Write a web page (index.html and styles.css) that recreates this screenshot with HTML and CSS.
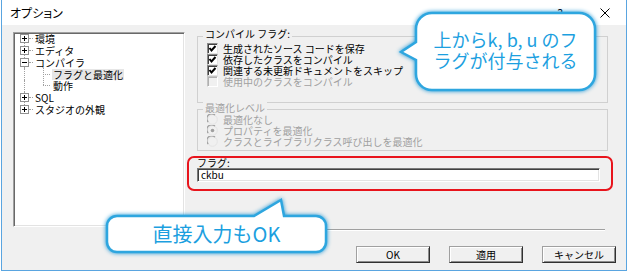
FILE: index.html
```html
<!DOCTYPE html>
<html lang="ja">
<head>
  <meta charset="UTF-8">
  <title>オプション</title>
  <link rel="stylesheet" href="styles.css">
</head>
<body>

  <div class="window">
    <div class="titlebar">
      <span class="title">オプション</span>
      <span class="help">?</span>
      <svg class="close" width="10" height="10" viewBox="0 0 10 10">
        <path d="M0.5 0.5 L9.5 9.5 M9.5 0.5 L0.5 9.5" stroke="#000" stroke-width="1"/>
      </svg>
    </div>

    <div class="client">
      <div class="main">
        <!-- left tree -->
        <div class="tree">
          <ul class="tree-list">
            <li class="node first"><span class="pm plus"></span><span class="dash"></span><span class="label">環境</span></li>
            <li class="node"><span class="pm plus"></span><span class="dash"></span><span class="label">エディタ</span></li>
            <li class="node"><span class="pm minus"></span><span class="dash"></span><span class="label">コンパイラ</span></li>
            <li class="child"><span class="vline"></span><span class="elbow"></span><span class="label selected">フラグと最適化</span></li>
            <li class="child"><span class="vline"></span><span class="elbow last"></span><span class="label">動作</span></li>
            <li class="node"><span class="pm plus"></span><span class="dash"></span><span class="label">SQL</span></li>
            <li class="node last"><span class="pm plus"></span><span class="dash"></span><span class="label">スタジオの外観</span></li>
          </ul>
        </div>

        <!-- right panel -->
        <div class="panel">
          <div class="group group-flags">
            <div class="group-title">コンパイル フラグ:</div>
            <div class="opt"><span class="check"><svg width="11" height="11" viewBox="0 0 11 11"><path d="M2.5 5 L4.5 7.5 L8.5 3" fill="none" stroke="#000" stroke-width="2"/></svg></span>生成されたソース コードを保存</div>
            <div class="opt"><span class="check"><svg width="11" height="11" viewBox="0 0 11 11"><path d="M2.5 5 L4.5 7.5 L8.5 3" fill="none" stroke="#000" stroke-width="2"/></svg></span>依存したクラスをコンパイル</div>
            <div class="opt"><span class="check"><svg width="11" height="11" viewBox="0 0 11 11"><path d="M2.5 5 L4.5 7.5 L8.5 3" fill="none" stroke="#000" stroke-width="2"/></svg></span>関連する未更新ドキュメントをスキップ</div>
            <div class="opt disabled"><span class="check off"></span>使用中のクラスをコンパイル</div>
          </div>

          <div class="group group-level disabled">
            <div class="group-title">最適化レベル</div>
            <div class="opt"><span class="radio"><svg width="11" height="11" viewBox="0 0 11 11"><circle cx="5.5" cy="5.5" r="4.8" fill="#f0f0f0" stroke="#e3e3e3"/><path d="M1.2 8 A4.8 4.8 0 0 1 8 1.2" fill="none" stroke="#a0a0a0" stroke-width="1.2"/></svg></span>最適化なし</div>
            <div class="opt"><span class="radio"><svg width="11" height="11" viewBox="0 0 11 11"><circle cx="5.5" cy="5.5" r="4.8" fill="#f0f0f0" stroke="#e3e3e3"/><path d="M1.2 8 A4.8 4.8 0 0 1 8 1.2" fill="none" stroke="#a0a0a0" stroke-width="1.2"/><circle cx="5.5" cy="5.5" r="1.8" fill="#a0a0a0"/></svg></span>プロパティを最適化</div>
            <div class="opt"><span class="radio"><svg width="11" height="11" viewBox="0 0 11 11"><circle cx="5.5" cy="5.5" r="4.8" fill="#f0f0f0" stroke="#e3e3e3"/><path d="M1.2 8 A4.8 4.8 0 0 1 8 1.2" fill="none" stroke="#a0a0a0" stroke-width="1.2"/></svg></span>クラスとライブラリクラス呼び出しを最適化</div>
          </div>

          <div class="flag-box">
            <div class="flag-label">フラグ:</div>
            <div class="flag-input">ckbu</div>
          </div>
        </div>
      </div>

      <div class="separator"></div>

      <div class="buttons">
        <button class="btn">OK</button>
        <button class="btn">適用</button>
        <button class="btn">キャンセル</button>
      </div>
    </div>

    <!-- annotation balloons -->
    <div class="callout callout-top">
      <svg width="220" height="97" viewBox="0 0 220 97">
        <path d="M46 10 H193 A16 16 0 0 1 209 26 V71 A16 16 0 0 1 193 87 H46 A16 16 0 0 1 30 71 V57 L15 49 L30 39 V26 A16 16 0 0 1 46 10 Z"
              fill="#fff" stroke="#2ea6df" stroke-width="2.5"/>
      </svg>
      <div class="callout-text">上からk, b, u のフ<br>ラグが付与される</div>
    </div>

    <div class="callout callout-bottom">
      <svg width="240" height="72" viewBox="0 0 240 72">
        <path d="M20 26 H157 L184 10 L187 26 H219 A10 10 0 0 1 229 36 V52 A10 10 0 0 1 219 62 H20 A10 10 0 0 1 10 52 V36 A10 10 0 0 1 20 26 Z"
              fill="#fff" stroke="#2ea6df" stroke-width="2.5"/>
      </svg>
      <div class="callout-text">直接入力もOK</div>
    </div>
  </div>

</body>
</html>
```

FILE: styles.css
```css
body {
  margin: 0;
  background: #fff;
  font-family: "Noto Sans CJK JP", "Liberation Sans", sans-serif;
}

.window {
  position: relative;
  margin-left: 1px;
  width: 626px;
  height: 271px;
  box-sizing: border-box;
  border: 1px solid #5aa5e0;
  border-top: none;
  display: flex;
  flex-direction: column;
}

/* title bar */
.titlebar {
  height: 25px;
  flex: none;
  display: flex;
  align-items: center;
  padding: 0 16px 0 8px;
  background: #fff;
}

.title {
  font-size: 12px;
  font-feature-settings: "palt";
  color: #000;
}

.help {
  margin-left: auto;
  font-size: 12px;
  color: #000;
}

.close {
  margin-left: 37px;
  display: block;
}

/* dialog body */
.client {
  flex: 1;
  background: #f0f0f0;
  font-size: 10px;
  line-height: 11px;
  color: #000;
}

.main {
  display: grid;
  grid-template-columns: 172px 426px;
  column-gap: 2px;
  padding: 7px 0 0 11px;
}

/* tree */
.tree {
  height: 195px;
  box-sizing: border-box;
  background: #fff;
  border: 1px solid;
  border-color: #a0a0a0 #fff #fff #a0a0a0;
  box-shadow: inset 1px 1px 0 #696969, inset -1px -1px 0 #e3e3e3;
  padding-left: 6px;
  overflow: hidden;
}

.tree-list {
  list-style: none;
  margin: 0;
  padding: 0;
}

.tree-list li {
  height: 11.75px;
  display: flex;
  align-items: center;
  white-space: nowrap;
}

.node {
  background: repeating-linear-gradient(to bottom, #a0a0a0 0 1px, transparent 1px 2px) 4px 0 / 1px 100% no-repeat;
}

.node.first {
  background-position: 4px 100%;
  background-size: 1px 50%;
}

.node.last {
  background-size: 1px 50%;
}

.pm {
  width: 9px;
  height: 9px;
  box-sizing: border-box;
  border: 1px solid #919191;
  background:
    linear-gradient(#000, #000) center / 5px 1px no-repeat,
    #fff;
}

.pm.plus {
  background:
    linear-gradient(#000, #000) center / 5px 1px no-repeat,
    linear-gradient(#000, #000) center / 1px 5px no-repeat,
    #fff;
}

.dash {
  width: 4px;
  margin-right: 2px;
  border-top: 1px dotted #a0a0a0;
}

.vline {
  align-self: stretch;
  margin-left: 4px;
  width: 18px;
  border-left: 1px dotted #a0a0a0;
}

.elbow {
  align-self: stretch;
  width: 8px;
  background:
    repeating-linear-gradient(to bottom, #a0a0a0 0 1px, transparent 1px 2px) 0 0 / 1px 100% no-repeat,
    repeating-linear-gradient(to right, #a0a0a0 0 1px, transparent 1px 2px) 0 50% / 100% 1px no-repeat;
}

.elbow.last {
  background:
    repeating-linear-gradient(to bottom, #a0a0a0 0 1px, transparent 1px 2px) 0 0 / 1px 50% no-repeat,
    repeating-linear-gradient(to right, #a0a0a0 0 1px, transparent 1px 2px) 0 50% / 100% 1px no-repeat;
}

.child .label {
  margin-left: 1px;
  padding: 0 1px;
}

.label.selected {
  background: #e6e6e6;
}

/* right panel */
.panel {
  display: flex;
  flex-direction: column;
}

.group {
  margin: 4px 5px 0 10px;
  box-sizing: border-box;
  border: 1px solid #d0d0d0;
}

.group-flags {
  height: 67px;
}

.group-level {
  margin-top: 6px;
  height: 42px;
}

.group-title {
  width: fit-content;
  margin: -9px 0 0 5px;
  padding: 0 2px;
  line-height: 12px;
  background: #f0f0f0;
}

.group-flags .group-title {
  margin-bottom: 3px;
}

.group-level .group-title {
  margin-top: -8px;
}

.opt {
  height: 11px;
  display: flex;
  align-items: center;
  padding-left: 9px;
  white-space: nowrap;
}

.disabled,
.disabled .opt {
  color: #a0a0a0;
}

.check,
.radio {
  width: 11px;
  height: 11px;
  margin-right: 5px;
  flex: none;
}

.check {
  box-sizing: border-box;
  background: #fff;
  border: 1px solid;
  border-color: #8a8a8a #e3e3e3 #e3e3e3 #8a8a8a;
  box-shadow: inset 1px 1px 0 #404040;
}

.check svg,
.radio svg {
  display: block;
  margin: -1px 0 0 -1px;
}

.radio svg {
  margin: 0;
}

.check.off {
  background: #f0f0f0;
  border-color: #c4c4c4 #fff #fff #c4c4c4;
  box-shadow: inset 1px 1px 0 #b0b0b0;
}

/* flag field with red mark */
.flag-box {
  margin-top: 5px;
  border: 2px solid #e8141c;
  border-radius: 7px;
  padding: 0 11px 7px 8px;
}

.flag-label {
  line-height: 10px;
}

.flag-input {
  height: 14px;
  box-sizing: border-box;
  background: #fff;
  border: 1px solid;
  border-color: #7a7a7a #fff #fff #7a7a7a;
  box-shadow: inset 1px 1px 0 #404040, inset -1px -1px 0 #e3e3e3;
  padding-left: 3px;
  line-height: 12px;
}

/* bottom */
.separator {
  margin: 2px 0 0 194px;
  width: 409px;
  border-top: 1px solid #a0a0a0;
  border-bottom: 1px solid #fff;
}

.buttons {
  display: flex;
  justify-content: flex-end;
  gap: 19px;
  margin-top: 15px;
  padding-right: 10px;
}

.btn {
  width: 74px;
  height: 17px;
  padding: 0;
  font-family: "Noto Sans CJK JP", "Liberation Sans", sans-serif;
  font-size: 10px;
  line-height: 13px;
  color: #000;
  background: #f0f0f0;
  border: 1px solid;
  border-color: #a0a0a0 #303030 #303030 #a0a0a0;
  box-shadow: inset 1px 1px 0 #fff, inset -1px -1px 0 #8c8c8c;
}

/* balloons */
.callout {
  position: absolute;
  z-index: 5;
}

.callout svg {
  display: block;
  overflow: visible;
  filter: drop-shadow(0 0 2px #1b95d4);
}

.callout-text {
  position: absolute;
  text-align: center;
  color: #1c9fdf;
  white-space: nowrap;
}

.callout-top {
  left: 384px;
  top: 3px;
  width: 220px;
  height: 97px;
}

.callout-top .callout-text {
  left: 30px;
  top: 26px;
  width: 179px;
  font-size: 18px;
  line-height: 21px;
}

.callout-bottom {
  left: 95px;
  top: 190px;
  width: 240px;
  height: 72px;
}

.callout-bottom .callout-text {
  left: 10px;
  top: 26px;
  width: 219px;
  font-size: 20px;
  line-height: 36px;
}
```
